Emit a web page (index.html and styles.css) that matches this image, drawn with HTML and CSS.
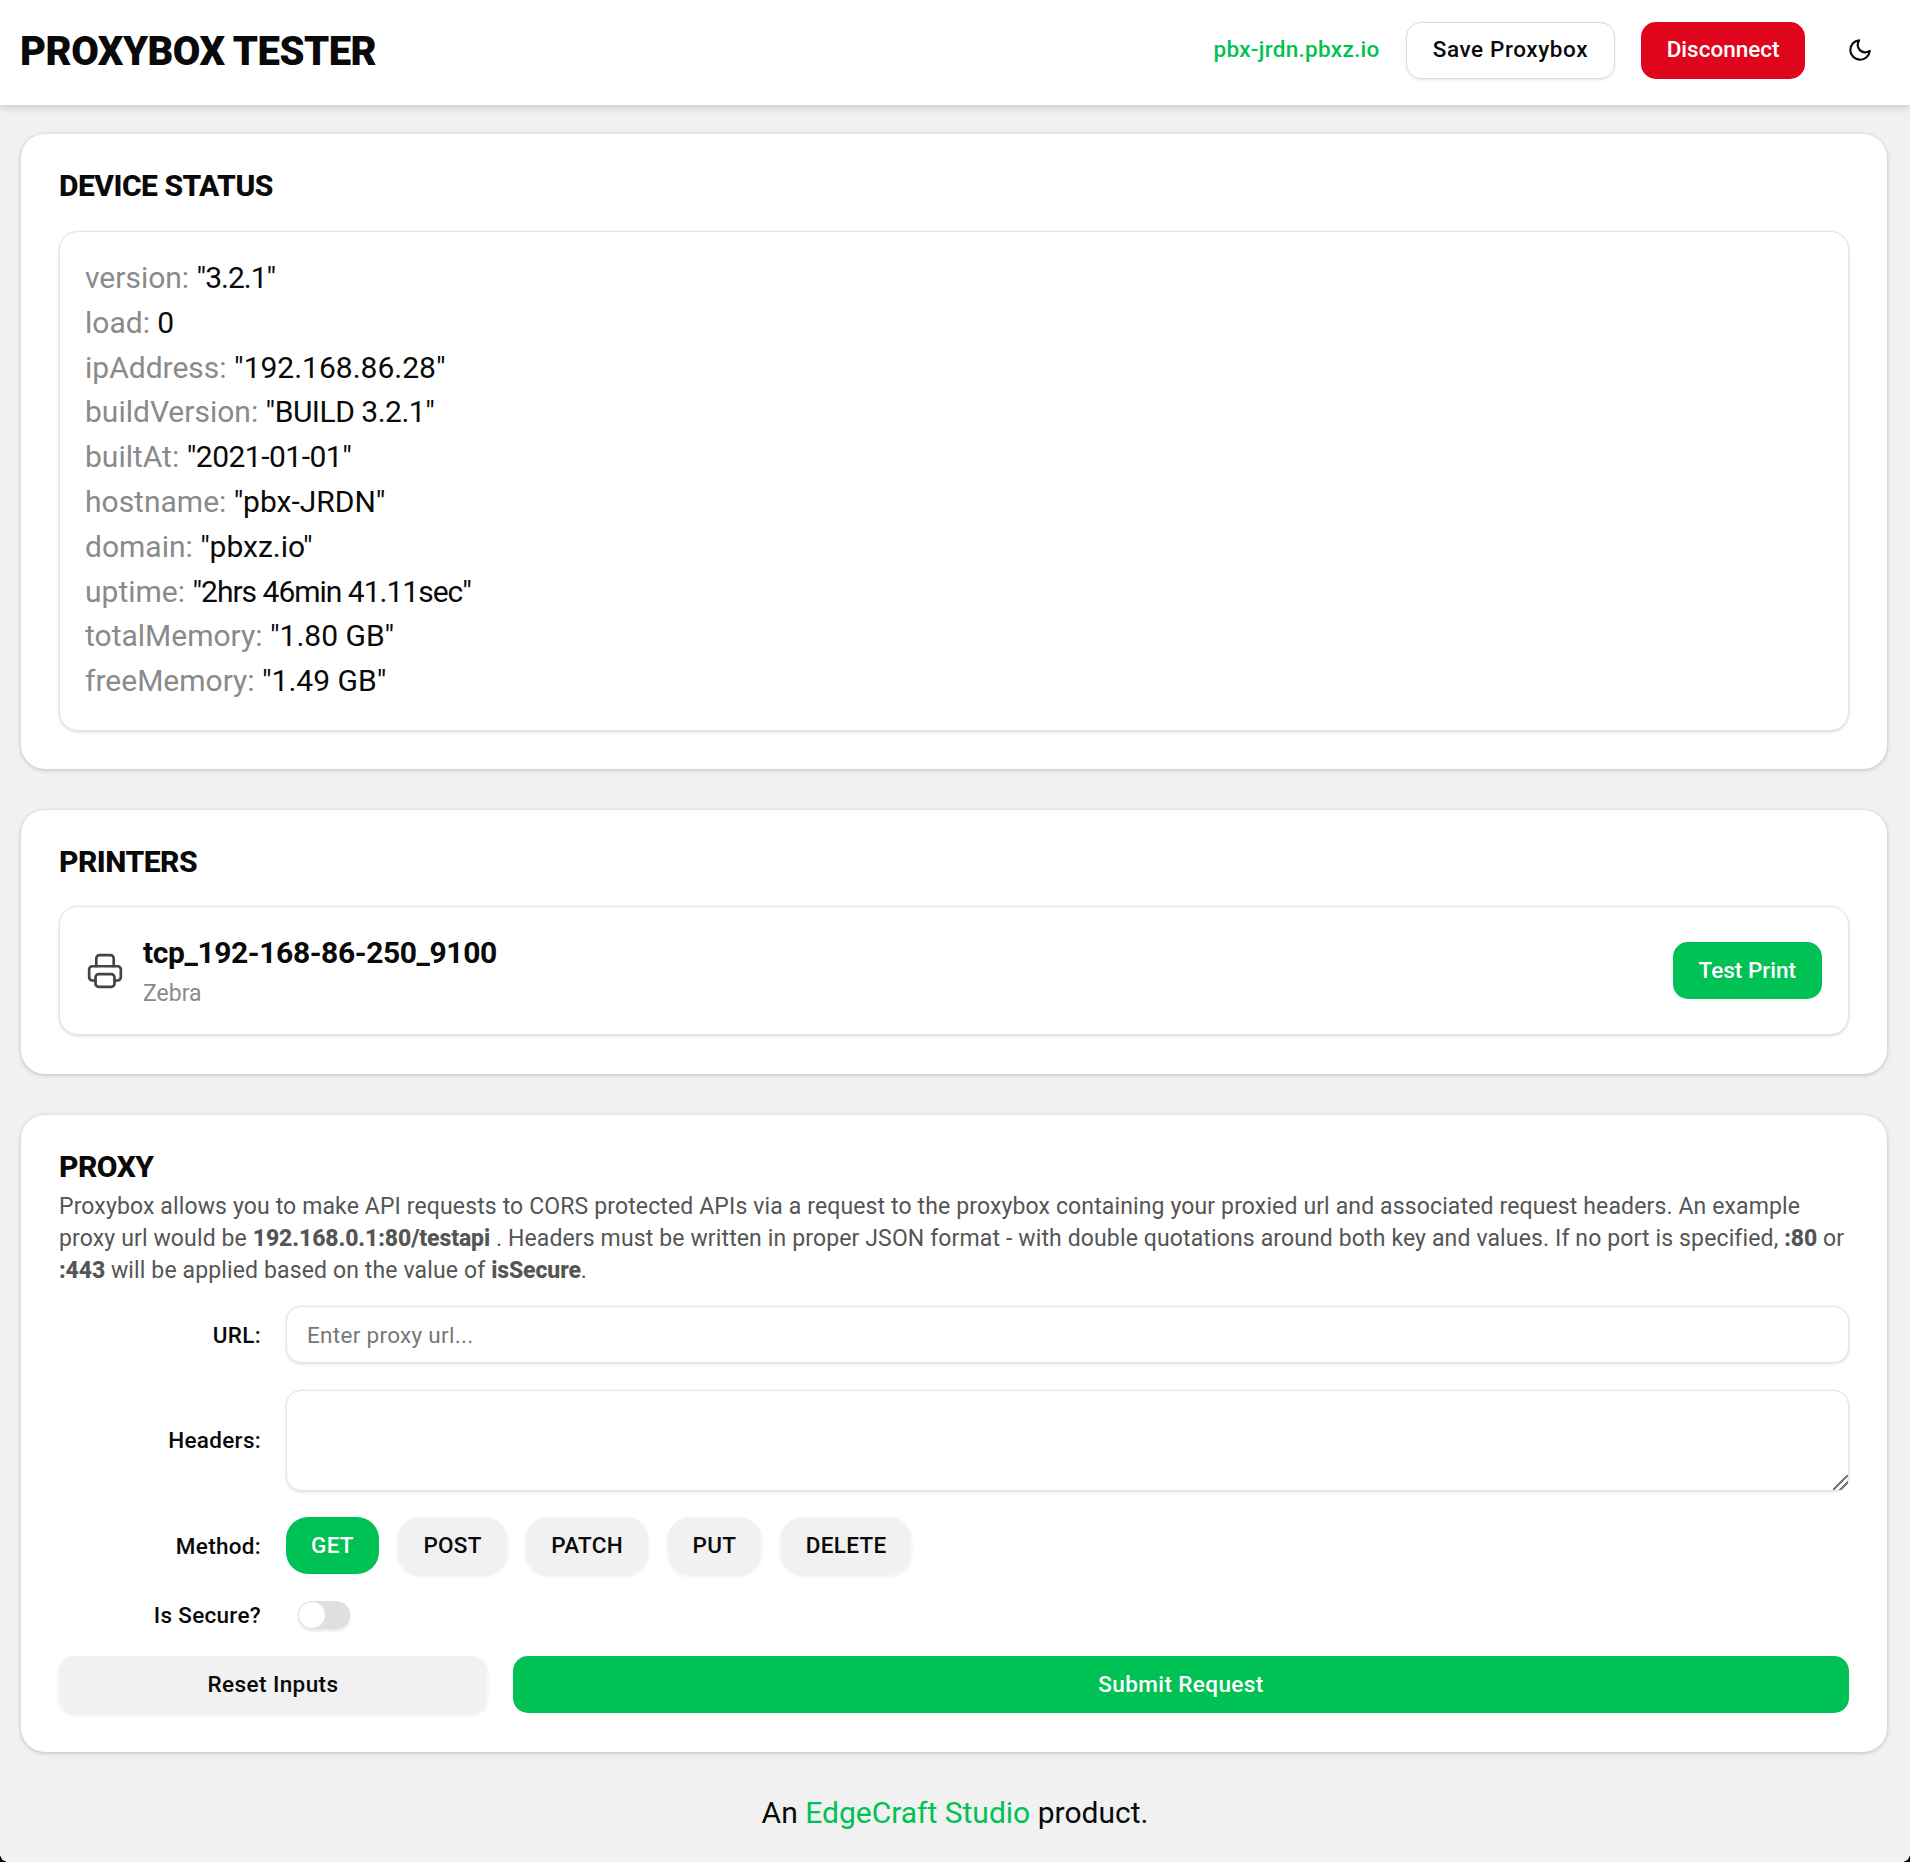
FILE: index.html
```html
<!DOCTYPE html>
<html>
	<head>
		<meta charset="UTF-8">
		<title>Proxybox Tester</title>
		<link rel="stylesheet" href="styles.css">
	</head>
	<body>
		<header class="topbar">
			<h1 class="brand">PROXYBOX TESTER</h1>
			<div class="topbar-right">
				<span class="host">pbx-jrdn.pbxz.io</span>
				<button class="btn btn-white">Save Proxybox</button>
				<button class="btn btn-red">Disconnect</button>
				<svg class="moon" viewBox="0 0 24 24" width="26" height="26" fill="none" stroke="#0a0a0a" stroke-width="2" stroke-linecap="round" stroke-linejoin="round"><path d="M21 12.79A9 9 0 1 1 11.21 3 7 7 0 0 0 21 12.79z"/></svg>
			</div>
		</header>

		<main class="page">
			<section class="card">
				<h2 class="card-title">DEVICE STATUS</h2>
				<div class="inner status-list">
					<div><span class="key">version:</span> <span class="val-tight">"3.2.1"</span></div>
					<div><span class="key">load:</span> 0</div>
					<div><span class="key">ipAddress:</span> "192.168.86.28"</div>
					<div><span class="key">buildVersion:</span> <span class="val-snug">"BUILD 3.2.1"</span></div>
					<div><span class="key">builtAt:</span> <span class="val-snug">"2021-01-01"</span></div>
					<div><span class="key">hostname:</span> "pbx-JRDN"</div>
					<div><span class="key">domain:</span> "pbxz.io"</div>
					<div><span class="key">uptime:</span> <span class="val-tight">"2hrs 46min 41.11sec"</span></div>
					<div><span class="key">totalMemory:</span> "1.80 GB"</div>
					<div><span class="key">freeMemory:</span> "1.49 GB"</div>
				</div>
			</section>

			<section class="card card-printers">
				<h2 class="card-title">PRINTERS</h2>
				<div class="inner printer">
					<svg class="printer-icon" viewBox="0 0 24 24" width="38" height="38" fill="none" stroke="#444" stroke-width="1.7" stroke-linecap="round" stroke-linejoin="round"><path d="M6.500 9V4a2 2 0 0 1 2-2h7a2 2 0 0 1 2 2v5"/><path d="M6 18H4a2 2 0 0 1-2-2v-5a2 2 0 0 1 2-2h16a2 2 0 0 1 2 2v5a2 2 0 0 1-2 2h-2"/><rect x="6" y="14" width="12" height="8" rx="2"/></svg>
					<div class="printer-text">
						<div class="printer-name">tcp_192-168-86-250_9100</div>
						<div class="printer-brand">Zebra</div>
					</div>
					<button class="btn btn-green">Test Print</button>
				</div>
			</section>

			<section class="card card-proxy">
				<h2 class="card-title">PROXY</h2>
				<p class="intro">Proxybox allows you to make API requests to CORS protected APIs via a request to the proxybox containing your proxied url and associated request headers. An example proxy url would be <b>192.168.0.1:80/testapi</b> . Headers must be written in proper JSON format - with double quotations around both key and values. If no port is specified, <b>:80</b> or <b>:443</b> will be applied based on the value of <b>isSecure</b>.</p>
				<div class="form">
					<label class="form-label">URL:</label>
					<input class="field" type="text" placeholder="Enter proxy url...">
					<label class="form-label">Headers:</label>
					<textarea class="field field-area"></textarea>
					<label class="form-label">Method:</label>
					<div class="methods">
						<button class="method method-on">GET</button>
						<button class="method">POST</button>
						<button class="method">PATCH</button>
						<button class="method">PUT</button>
						<button class="method">DELETE</button>
					</div>
					<label class="form-label">Is Secure?</label>
					<div class="switch-row"><span class="switch"><span class="switch-knob"></span></span></div>
				</div>
				<div class="actions">
					<button class="btn btn-grey">Reset Inputs</button>
					<button class="btn btn-green">Submit Request</button>
				</div>
			</section>
		</main>

		<footer class="foot">An <a href="#">EdgeCraft Studio</a> product.</footer>
		<span class="corner corner-left"></span>
		<span class="corner corner-right"></span>
	</body>
</html>
```

FILE: styles.css
```css
*{
	margin: 0;
	padding: 0;
	box-sizing: border-box;
}
body{
	background: #f1f1f1;
	color: #0a0a0a;
	font-family: "Roboto", "Noto Sans", sans-serif;
	height: 1862px;
	overflow: hidden;
	position: relative;
}
button,input,textarea{
	font-family: inherit;
}
.topbar{
	height: 105px;
	background: #fff;
	box-shadow: 0 2px 8px rgba(0,0,0,.2);
	display: flex;
	align-items: center;
	justify-content: space-between;
	padding: 0 37px 5px 20px;
}
.brand{
	font-size: 40px;
	font-weight: 900;
	letter-spacing: -0.5px;
	margin-top: 2px;
}
.topbar-right{
	display: flex;
	align-items: center;
	gap: 26px;
}
.host{
	color: #00c153;
	font-size: 22.500px;
	font-weight: 500;
	letter-spacing: .3px;
	margin-bottom: 2px;
}
.moon{
	margin-left: 16px;
}
.btn{
	height: 57px;
	border: none;
	border-radius: 15px;
	font-size: 22.500px;
	font-weight: 500;
	padding: 0 26px 2px;
}
.btn-white{
	background: #fff;
	border: 1px solid #ddd;
	box-shadow: 0 1px 3px rgba(0,0,0,.1);
	color: #0a0a0a;
	letter-spacing: .6px;
}
.btn-red{
	background: #df051c;
	color: #fff;
	padding: 0 25.500px 2px;
}
.btn-green{
	background: #00c153;
	color: #fff;
}
.btn-grey{
	background: #f1f1f1;
	color: #0a0a0a;
	box-shadow: 0 2px 4px rgba(0,0,0,.08);
}
.page{
	padding: 29px 23px 0 21px;
	display: flex;
	flex-direction: column;
	gap: 41px;
}
.card{
	background: #fff;
	border-radius: 24px;
	padding: 34px 38px 38px;
	box-shadow: 0 1px 4px rgba(0,0,0,.22);
}
.card-title{
	font-size: 30px;
	line-height: 36px;
	font-weight: 800;
	letter-spacing: -0.5px;
	margin-bottom: 27px;
}
.inner{
	border-radius: 19px;
	background: #fff;
	border: 1px solid #e4e4e4;
	box-shadow: 0 1px 3px rgba(0,0,0,.16);
}
.status-list{
	padding: 24px 25px;
	font-size: 30px;
	line-height: 44.800px;
	height: 500px;
}
.key{
	color: #8a8a8a;
}
.val-tight{
	letter-spacing: -1px;
}
.val-snug{
	letter-spacing: -0.5px;
}
.card-printers{
	padding-bottom: 39px;
}
.card-printers .card-title{
	margin-bottom: 26px;
}
.printer{
	display: flex;
	align-items: center;
	height: 129px;
	padding: 0 26px;
}
.printer-icon{
	margin-right: 19px;
}
.printer-text{
	flex: 1;
}
.printer-name{
	font-size: 30px;
	font-weight: 700;
	letter-spacing: -0.4px;
	line-height: 38px;
	margin-top: 2px;
}
.printer-brand{
	color: #8a8a8a;
	font-size: 23px;
	line-height: 32px;
	margin-top: 6px;
}
.card-proxy{
	padding-bottom: 39.500px;
}
.card-proxy .card-title{
	margin-bottom: 6px;
}
.intro{
	color: #555;
	font-size: 23px;
	letter-spacing: .13px;
	line-height: 32px;
	margin-bottom: 19px;
}
.intro b{
	font-weight: 800;
	letter-spacing: -0.1px;
}
.form{
	display: grid;
	grid-template-columns: 202px 1fr;
	column-gap: 25px;
	row-gap: 26.500px;
	align-items: center;
}
.form-label{
	text-align: right;
	font-size: 22.500px;
	font-weight: 500;
	letter-spacing: .3px;
}
.field{
	display: block;
	width: 100%;
	height: 57px;
	border: 1px solid #e4e4e4;
	border-radius: 15px;
	box-shadow: 0 1px 3px rgba(0,0,0,.14);
	padding: 0 20px;
	font-size: 22.500px;
	letter-spacing: .3px;
	background: #fff;
	outline: none;
}
.field::placeholder{
	color: #777;
}
.field-area{
	height: 101px;
	resize: vertical;
}
.field-area::-webkit-resizer{
	background: linear-gradient(135deg, transparent 46%, #777 46%, #777 54%, transparent 54%, transparent 70%, #777 70%, #777 78%, transparent 78%);
}
.methods{
	display: flex;
	gap: 19.500px;
}
.method{
	height: 57px;
	border: none;
	border-radius: 22px;
	background: #f1f1f1;
	color: #0a0a0a;
	font-size: 22.500px;
	font-weight: 500;
	letter-spacing: .3px;
	padding: 0 25px 2px;
	box-shadow: 0 2px 4px rgba(0,0,0,.08);
}
.method-on{
	background: #00c153;
	color: #fff;
	box-shadow: none;
}
.switch-row{
	padding-left: 12px;
}
.switch{
	display: block;
	width: 52px;
	height: 28px;
	background: #dfdfe2;
	border-radius: 14px;
	box-shadow: 0 2px 3px rgba(0,0,0,.1);
	position: relative;
}
.switch-knob{
	position: absolute;
	top: 1px;
	left: 1px;
	width: 26px;
	height: 26px;
	border-radius: 50%;
	background: #fff;
}
.actions{
	display: flex;
	gap: 26px;
	margin-top: 27px;
}
.actions .btn{
	letter-spacing: .4px;
	padding-bottom: 0;
}
.actions .btn-grey{
	width: 428px;
}
.actions .btn-green{
	flex: 1;
}
.foot{
	text-align: center;
	font-size: 30px;
	margin-top: 43px;
}
.foot a{
	color: #00c153;
	text-decoration: none;
}
.corner{
	position: absolute;
	bottom: 0;
	width: 8px;
	height: 8px;
}
.corner-left{
	left: 0;
	background: radial-gradient(circle 8px at 100% 0, transparent 97%, #000 100%);
}
.corner-right{
	right: 0;
	background: radial-gradient(circle 8px at 0 0, transparent 97%, #000 100%);
}
```
